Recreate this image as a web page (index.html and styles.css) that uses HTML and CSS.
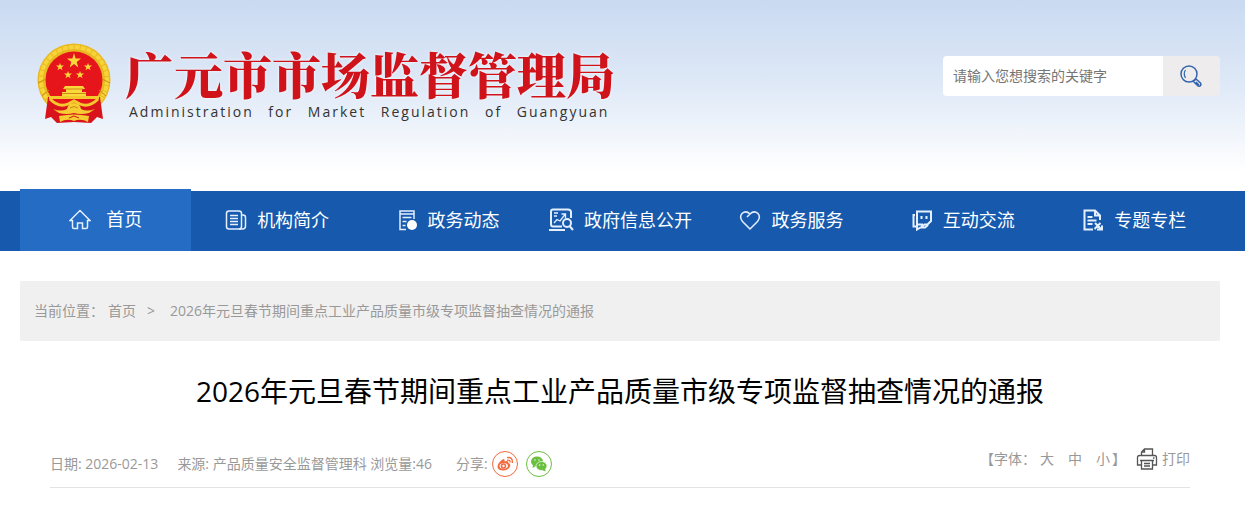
FILE: index.html
```html
<!DOCTYPE html>
<html lang="zh-CN">
<head>
    <meta charset="UTF-8">
    <meta name="viewport" content="width=device-width, initial-scale=1.0">
    <title>2026年元旦春节期间重点工业产品质量市级专项监督抽查情况的通报</title>
    <link rel="stylesheet" href="styles.css">
</head>
<body>
    <header class="header">
        <div class="wrap header-inner">
            <a class="logo" href="#">
                <!-- 国徽 -->
                <svg class="emblem" viewBox="0 0 74 81" aria-hidden="true">
                    <circle cx="37" cy="37" r="36.500" fill="#eab821"/>
                    <circle cx="37" cy="37" r="33" fill="none" stroke="#f6d43a" stroke-width="4" stroke-dasharray="5 1"/>
                    <circle cx="37" cy="37" r="28.500" fill="#e5151b"/>
                    <path d="M1 40 L9 36 M73 40 L65 36 M5 53 L12 47 M69 53 L62 47" stroke="#c98a18" stroke-width="1"/>
                    <path d="M11 54 L8 76 L14 74 L20 80 L37 79 L54 80 L60 74 L66 76 L63 54 Z" fill="#d8131b"/>
                    <g fill="#fbd93a">
                        <path d="M37 10 L38.600 15.500 L44 15.500 L39.700 18.900 L41.300 24.400 L37 21 L32.700 24.400 L34.300 18.900 L30 15.500 L35.400 15.500 Z"/>
                        <path d="M23 20 l1 2.600 h3 l-2.400 1.800 .9 2.900 -2.500-1.700 -2.500 1.700 .9-2.900 -2.400-1.800 h3z"/>
                        <path d="M51 20 l1 2.600 h3 l-2.400 1.800 .9 2.900 -2.500-1.700 -2.500 1.700 .9-2.900 -2.400-1.800 h3z"/>
                        <path d="M31 28 l1 2.600 h3 l-2.400 1.800 .9 2.900 -2.500-1.700 -2.500 1.700 .9-2.900 -2.400-1.800 h3z"/>
                        <path d="M43 28 l1 2.600 h3 l-2.400 1.800 .9 2.900 -2.500-1.700 -2.500 1.700 .9-2.900 -2.400-1.800 h3z"/>
                        <path d="M28 43 h18 l2 3 h-3 v3 h4 v4 H25 v-4 h4 v-3 h-3z"/>
                    </g>
                    <path d="M28 46 h18 M25 50.500 h24" stroke="#c98a18"/>
                    <path d="M14 55 H60 L50 62 L43 60 L37 58 L31 60 L24 62 Z" fill="#e5151b"/>
                    <path d="M12 54.500 H62 M13 56 Q22 65 31 61 L37 58 L43 61 Q52 65 61 56" fill="none" stroke="#f3c92e" stroke-width="3"/>
                    <path d="M16 66 Q24 69 30 66 Q31 60 37 60 Q43 60 44 66 Q50 69 58 66 L52 70 Q44 72 37 70 Q30 72 22 70 Z" fill="#f5cd32"/>
                    <path d="M33 65 Q37 62 41 65" fill="none" stroke="#c98a18"/>
                    <path d="M22 73 Q37 70 52 73 L51 79 Q44 75 37 78 Q30 75 23 79 Z" fill="#f5cd32"/>
                    <path d="M32 75 L37 73 L42 75" fill="none" stroke="#d8131b"/>
                </svg>
                <span class="logo-text">
                    <span class="logo-cn">广元市市场监督管理局</span>
                    <span class="logo-en">Administration &ensp;for &ensp;Market &ensp;Regulation &ensp;of &ensp;Guangyuan</span>
                </span>
            </a>
            <form class="search">
                <input class="search-input" type="text" placeholder="请输入您想搜索的关键字" aria-label="请输入您想搜索的关键字">
                <button class="search-btn" type="button" aria-label="搜索">
                    <svg width="24" height="24" viewBox="0 0 24 24" fill="none" stroke="#3465ae" stroke-width="1.500">
                        <circle cx="9" cy="10" r="8"/>
                        <path d="M5.500 6 Q3 9.500 5.500 14" stroke-width="1.200"/>
                        <path d="M13.500 17.500 L16 15 L20.500 19 Q21.500 21 20 22 Q18.500 22.500 17.500 21.500 Z M16 18 L19 21"/>
                    </svg>
                </button>
            </form>
        </div>
    </header>

    <nav class="nav">
        <ul class="wrap nav-list">
            <li><a class="nav-link active" href="#">
                <svg width="22" height="22" viewBox="0 0 22 22"><path d="M3.500 12.500 H1 L11 2.500 L21 12.500 H18.500 V19 Q18.500 20.500 17 20.500 H13.500 V15 H8.500 V20.500 H5 Q3.500 20.500 3.500 19 Z"/></svg>
                首页</a></li>
            <li><a class="nav-link" href="#">
                <svg width="22" height="22" viewBox="0 0 22 22"><rect x="1.500" y="2" width="15" height="18" rx="2.500"/><path d="M5 6.500 h8 M5 9.500 h8 M5 12.500 h8 M5 15.500 h8 M16.500 6 H18 Q20.500 6 20.500 8.500 V17 Q20.500 20 17.500 20 H14"/></svg>
                机构简介</a></li>
            <li><a class="nav-link" href="#">
                <svg width="20" height="22" viewBox="0 0 20 22"><path d="M8 20.500 H2 V2 H16 V10 M2 5 H16 M4.500 8.500 h9 M4.500 12.500 h4 M4.500 16.500 h3"/><circle cx="14" cy="16" r="5" fill="#fff" stroke="none"/></svg>
                政务动态</a></li>
            <li><a class="nav-link" href="#">
                <svg width="26" height="24" viewBox="0 0 26 24" class="bold"><path d="M14 18.500 H5 Q3 18.500 3 16 V3.500 Q3 1.500 5 1.500 H20 Q23 1.500 23 4 V10 M1 22 H17"/><path d="M6 5 h4 M6 8 h3 M6 15 L9 11.500 L12 13 L17 6.500 M13.500 6 h4 v4" stroke-width="1.300"/><circle cx="19" cy="15" r="4"/><path d="M21.500 18 L25 22"/></svg>
                政府信息公开</a></li>
            <li><a class="nav-link" href="#">
                <svg width="22" height="22" viewBox="0 0 22 22"><path d="M11 20 L3.500 12.500 Q0 8 3 4.500 Q7 1 11 5 Q15 1 19 4.500 Q22 8 18.500 12.500 Z M11 5 L8 8"/></svg>
                政务服务</a></li>
            <li><a class="nav-link" href="#">
                <svg width="22" height="22" viewBox="0 0 22 22" class="bold"><path d="M6 2.500 H20 V12 L16.500 15.500 H13.500 L11 17.500 V15.500 H6 Z M4 6 H2.500 V17.500 H6 V20.500 L9.500 18.500 H14 L17 16 M10.500 7 v3 M15.500 7 v3"/></svg>
                互动交流</a></li>
            <li><a class="nav-link" href="#">
                <svg width="22" height="22" viewBox="0 0 22 22" class="bold"><path d="M11 20.500 H2.500 V1.500 H13 L18 6.500 V11 M13 1.500 V6.500 H18 M5.500 8 h5 M5.500 11.500 h9 M5.500 15 h5 M13 14 L19.500 20.500 M18.500 14 L12.500 20 M15 20.500 h5 v-4"/></svg>
                专题专栏</a></li>
        </ul>
    </nav>

    <main class="wrap">
        <div class="crumb">
            <span>当前位置：</span>
            <a href="#">首页</a>
            <span class="crumb-sep">&gt;</span>
            <a href="#">2026年元旦春节期间重点工业产品质量市级专项监督抽查情况的通报</a>
        </div>

        <article class="article">
            <h1>2026年元旦春节期间重点工业产品质量市级专项监督抽查情况的通报</h1>
            <div class="meta">
                <div class="meta-left">
                    <span class="meta-date">日期: 2026-02-13</span>
                    <span class="meta-source">来源: 产品质量安全监督管理科 浏览量:46</span>
                    <span>分享:</span>
                    <a class="share weibo" href="#" aria-label="分享到微博">
                        <svg width="18" height="18" viewBox="0 0 18 18" fill="none" stroke="#f26a3d" stroke-width="1.600">
                            <path fill="#f26a3d" stroke="none" fill-rule="evenodd" d="M7.500 4 Q9 4 8.500 6.500 Q12.500 5 12.500 8 Q15 9 14 11.500 Q12 15.500 7 15.500 Q1.500 15.500 1.500 11.500 Q2 7 7.500 4 Z M7.500 8 Q3.500 8.500 3.500 11.300 Q4 14 7.500 13.800 Q12 13.500 12 10.800 Q11.500 8 7.500 8 Z"/>
                            <circle cx="7.500" cy="11" r="2"/>
                            <path d="M11 2.700 Q17 1.500 16.300 8 M11 5.300 Q14.500 4.500 14 7.500" stroke-width="1.300"/>
                        </svg>
                    </a>
                    <a class="share wechat" href="#" aria-label="分享到微信">
                        <svg width="18" height="18" viewBox="0 0 18 18" fill="#6abf3d">
                            <ellipse cx="7" cy="6.500" rx="6" ry="5"/><path d="M3 9.500 L2.500 13 L6 11 Z"/>
                            <ellipse cx="11.500" cy="11" rx="5.500" ry="4.500" stroke="#fff" stroke-width=".7"/><path d="M12 15 L15.500 16.500 L15 13 Z"/>
                            <g fill="#fff"><circle cx="5" cy="5" r=".7"/><circle cx="9" cy="5" r=".7"/><circle cx="9.700" cy="10" r=".7"/><circle cx="13.200" cy="10" r=".7"/></g>
                        </svg>
                    </a>
                </div>
                <div class="meta-right">
                    <span class="font-label">【字体：</span>
                    <button type="button">大</button>
                    <button type="button">中</button>
                    <button type="button">小</button>
                    <span class="bracket">】</span>
                    <a class="print" href="#">
                        <svg width="22" height="22" viewBox="0 0 22 22" fill="none" stroke="#555" stroke-width="1.300">
                            <path d="M5.500 7.500 V4 L8.500 1 H16.500 V7.500 M8.500 1 V4 H5.500 M5 17 H1.500 V9.500 Q1.500 7.500 3.500 7.500 H18.500 Q20.500 7.500 20.500 9.500 V17 H17 M17 10 h1.500"/>
                            <path d="M4 12.500 H18 M5.500 12.500 V21 H16.500 V12.500 M8 15.500 h6 M8 18 h6"/>
                        </svg>
                        打印</a>
                </div>
            </div>
        </article>
    </main>
</body>
</html>
```
FILE: styles.css
```css
* {
    box-sizing: border-box;
    margin: 0;
    padding: 0;
}
body {
    font-family: "Open Sans", "Noto Sans CJK SC", sans-serif;
    font-size: 14px;
    line-height: 20px;
    color: #999;
    background: #fff;
}
a {
    color: inherit;
    text-decoration: none;
}
button {
    font: inherit;
    color: inherit;
    border: none;
    background: none;
    cursor: pointer;
}
.wrap {
    margin: 0 25px 0 20px;
}

/* 顶部 */
.header {
    background: linear-gradient(#c9daf1, #dfe9f7 45%, #fff 90%);
}
.header-inner {
    display: flex;
    justify-content: space-between;
    align-items: flex-start;
    padding: 43px 0 67px 17px;
}
.logo {
    display: flex;
    gap: 14px;
}
.emblem {
    width: 74px;
    height: 81px;
}
.logo-text {
    display: flex;
    flex-direction: column;
    white-space: nowrap;
}
.logo-cn {
    font-family: "Noto Serif CJK SC", "Noto Sans CJK SC", serif;
    font-size: 49px;
    font-weight: 900;
    line-height: 60px;
    color: #d0121b;
    text-shadow: 0 0 3px #fff;
}
.logo-en {
    padding-left: 4px;
    font-size: 14px;
    line-height: 18px;
    letter-spacing: 2px;
    color: #333;
}
.search {
    display: flex;
    height: 40px;
    margin-top: 13px;
    border-radius: 4px;
    overflow: hidden;
}
.search-input {
    width: 220px;
    padding: 0 10px;
    border: none;
    font: inherit;
    color: #333;
    background: #fff;
}
.search-input::placeholder {
    color: #757575;
}
.search-btn {
    display: flex;
    align-items: center;
    justify-content: center;
    width: 57px;
    background: #eeecec;
}

/* 导航 */
.nav {
    background: #175aad;
}
.nav-list {
    display: grid;
    grid-template-columns: repeat(7, 1fr);
    list-style: none;
}
.nav-link {
    display: flex;
    align-items: center;
    justify-content: center;
    gap: 10px;
    height: 60px;
    padding-bottom: 2px;
    font-size: 18px;
    color: #fff;
    white-space: nowrap;
}
.nav-link svg {
    fill: none;
    stroke: #e4efff;
    stroke-width: 1.5;
}
.nav-link svg.bold {
    stroke-width: 2;
}
.nav-link.active {
    gap: 15px;
    height: 62px;
    margin-top: -2px;
    background: #256cc4;
}

/* 当前位置 */
.crumb {
    display: flex;
    align-items: center;
    height: 60px;
    margin-top: 30px;
    padding: 0 14px;
    background: #f0f0f0;
}
.crumb-sep {
    margin: 0 15px 0 11px;
}
.crumb span:first-child {
    margin-right: 4px;
}

/* 正文标题 */
.article {
    padding: 30px 30px 20px;
}
h1 {
    font-size: 28px;
    font-weight: 400;
    line-height: 40px;
    text-align: center;
    color: #000;
}
.meta {
    display: flex;
    justify-content: space-between;
    align-items: flex-start;
    height: 77px;
    padding-top: 37px;
    border-bottom: 1px solid #e3e3e3;
}
.meta-left,
.meta-right {
    display: flex;
    align-items: center;
    white-space: nowrap;
}
.meta-left {
    padding-top: 3px;
}
.meta-date {
    margin-right: 19px;
}
.meta-source {
    margin-right: 24px;
}
.share {
    display: flex;
    align-items: center;
    justify-content: center;
    width: 26px;
    height: 26px;
    margin-left: 4px;
    border: 1px solid #f26a3d;
    border-radius: 50%;
}
.share.wechat {
    margin-left: 8px;
    border-color: #6abf3d;
}
.font-label {
    margin-right: 4px;
}
.meta-right button {
    margin-right: 14px;
}
.meta-right .bracket {
    margin-left: -12px;
}
.print {
    display: flex;
    align-items: center;
    gap: 4px;
    margin-left: 10px;
}
```
